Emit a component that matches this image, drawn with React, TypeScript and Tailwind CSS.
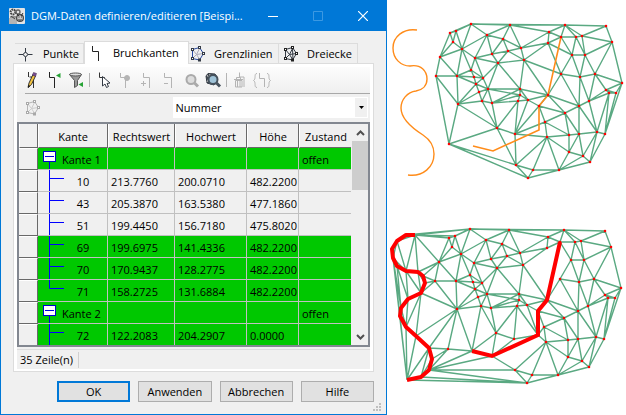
import { useState } from 'react';
import type { ReactNode } from 'react';

type Point = [number, number];

/* ---------- Triangulation ---------- */

const terrain: Point[] = [
  [450, 33], [456, 31], [453, 42], [471, 24], [462, 49], [440, 57], [487, 35], [503, 39],
  [510, 25], [508, 51], [492, 54], [475, 58], [498, 63], [471, 70], [436, 76], [457, 76],
  [474, 77], [483, 78], [476, 84], [488, 89], [479, 92], [482, 101], [458, 104], [492, 103],
  [497, 128], [449, 144], [549, 32], [565, 25], [606, 26], [561, 37], [576, 37], [582, 36],
  [548, 43], [521, 48], [524, 60], [612, 42], [572, 55], [585, 55], [561, 74], [580, 77],
  [595, 74], [622, 83], [606, 90], [609, 93], [616, 93], [520, 89], [520, 95], [528, 100],
  [518, 101], [548, 95], [539, 106], [565, 113], [579, 106], [589, 101], [545, 122], [515, 134],
  [547, 137], [569, 135], [579, 134], [597, 132], [605, 134], [569, 152], [583, 156], [590, 162],
  [559, 170], [533, 170], [516, 165], [528, 178],
];

const ridge: Point[] = [[561, 37], [548, 95], [539, 106], [539, 130], [493, 151], [473, 146]];

const shore: Point[] = [
  [416, 30], [407, 30], [398, 36], [393, 44], [394, 53], [398, 61], [407, 66], [419, 67],
  [424, 71], [426, 78], [422, 88], [409, 94], [402, 103], [401, 111], [407, 122], [417, 131],
  [430, 143], [433, 154], [430, 165], [422, 172], [408, 175],
];

const cross = (a: Point, b: Point, c: Point) =>
  (b[0] - a[0]) * (c[1] - a[1]) - (b[1] - a[1]) * (c[0] - a[0]);

const inCircle = (a: Point, b: Point, c: Point, d: Point) => {
  const ax = a[0] - d[0], ay = a[1] - d[1];
  const bx = b[0] - d[0], by = b[1] - d[1];
  const cx = c[0] - d[0], cy = c[1] - d[1];
  const a2 = ax * ax + ay * ay, b2 = bx * bx + by * by, c2 = cx * cx + cy * cy;
  return ax * (by * c2 - b2 * cy) - ay * (bx * c2 - b2 * cx) + a2 * (bx * cy - by * cx) > 0;
};

const intersects = (a: Point, b: Point, c: Point, d: Point) =>
  cross(a, b, c) * cross(a, b, d) < 0 && cross(c, d, a) * cross(c, d, b) < 0;

// Delaunay edges by the empty circle test, without those that cross a break line
function meshPath(points: Point[], breaklines: Point[][]) {
  const edges = new Map<string, [Point, Point]>();
  const n = points.length;
  for (let i = 0; i < n; i++) {
    for (let j = i + 1; j < n; j++) {
      for (let k = j + 1; k < n; k++) {
        const a = points[i];
        const turn = cross(a, points[j], points[k]);
        if (turn === 0) continue;
        const b = turn > 0 ? points[j] : points[k];
        const c = turn > 0 ? points[k] : points[j];
        if (points.some((p) => p !== a && p !== b && p !== c && inCircle(a, b, c, p))) continue;
        edges.set(`${i}-${j}`, [points[i], points[j]]);
        edges.set(`${j}-${k}`, [points[j], points[k]]);
        edges.set(`${i}-${k}`, [points[i], points[k]]);
      }
    }
  }
  return [...edges.values()]
    .filter(([a, b]) => !breaklines.some((l) => l.slice(1).some((p, i) => intersects(a, b, l[i], p))))
    .map(([a, b]) => `M${a}L${b}`)
    .join('');
}

const linePath = (line: Point[]) => 'M' + line.join('L');

const plainMesh = meshPath(terrain, []);
const brokenMesh = meshPath([...terrain, ...ridge.slice(3), ...shore], [ridge, shore]);

function Nodes() {
  return (
    <g fill="#f00">
      {terrain.map(([x, y]) => (
        <path key={`${x}-${y}`} d={`M${x - 1} ${y - 1}h2v2h-2z`} stroke="#f00" strokeWidth=".3" />
      ))}
    </g>
  );
}

function Terrain() {
  return (
    <svg viewBox="387 0 239 415" className="block w-full" fill="none" role="img" aria-label="Dreiecksnetz">
      <path d={plainMesh} stroke="#5aa982" strokeWidth="1.4" />
      <path d={linePath(ridge)} stroke="#ff8c1a" strokeWidth="1.6" />
      <path
        d="M417 30C403 28 393 37 393 48C393 59 401 66 410 66C421 64 427 71 427 79C427 86 422 90 416 91C407 92 401 100 401 108C401 119 412 128 423 135C429 139 434 146 434 154C434 167 423 177 408 175"
        stroke="#ff8c1a"
        strokeWidth="1.4"
      />
      <Nodes />
      <g transform="translate(-1 205)">
        <path d={brokenMesh} stroke="#5aa982" strokeWidth="1.4" />
        <Nodes />
        <path d={linePath(ridge)} stroke="#f00" strokeWidth="4" />
        <path d={linePath(shore)} stroke="#f00" strokeWidth="4" strokeLinejoin="round" />
      </g>
    </svg>
  );
}

/* ---------- Icons ---------- */

function Icon({ children, size = 22 }: { children: ReactNode; size?: number }) {
  return (
    <svg width={size} height={size} viewBox={`0 0 ${size} ${size}`} fill="none" stroke="currentColor" className="shrink-0">
      {children}
    </svg>
  );
}

function AppIcon() {
  return (
    <svg width="16" height="16" viewBox="0 0 16 16" fill="none" className="shrink-0">
      <rect width="16" height="16" rx="1" fill="#e4e4e4" />
      <path d="M0 10h8v6H0z" fill="#b5b5b5" />
      <circle cx="4" cy="4" r="2.4" stroke="#444" strokeWidth="2" strokeDasharray="1.6 .6" />
      <circle cx="9" cy="4" r="2" stroke="#666" strokeWidth="1.4" />
      <path d="M1 9h6M2 8l4 3" stroke="#444" />
      <circle cx="11" cy="10" r="3.4" fill="#c8c8c8" stroke="#444" strokeWidth="1.2" />
      <path d="M8 6l2 2M14 5l-2 3M9.500 9h1M12 9h1M9.500 11.500q1.500 1.500 3 0" stroke="#333" />
    </svg>
  );
}

function PointIcon() {
  return (
    <Icon size={16}>
      <path d="M1.500 8.500h4.500M11 8.500h4.500M8.500 2v4.500M8.500 11v4.500" stroke="#333a44" />
      <circle cx="8.500" cy="8.500" r="2" stroke="#333a44" />
    </Icon>
  );
}

function EdgeIcon() {
  return (
    <Icon size={16}>
      <path d="M3.500 1v5.500h6V16" stroke="#222" />
    </Icon>
  );
}

function PolygonIcon({ line, node, inner, closed }: { line: string; node: string; inner: string; closed?: boolean }) {
  return (
    <Icon size={16}>
      <path d="M2.500 3.500L6.500 8.500L9.500 2.500M2.500 12.500L6.500 8.500L10 14M6.500 8.500L13.500 7.500" stroke={inner} />
      {closed && <path d="M9.500 2.500L10 14" stroke={inner} />}
      <path d="M2.500 3.500L9.500 1.500L13.500 7.500L9.500 14L2.500 12.500Z" stroke={line} />
      <g stroke={node} fill="#fff">
        <rect x="1.500" y="2.500" width="2" height="2" />
        <rect x="8.500" y=".5" width="2" height="2" />
        <rect x="12.500" y="6.500" width="2" height="2" />
        <rect x="8.500" y="13" width="2" height="2" />
        <rect x="1.500" y="11.500" width="2" height="2" />
      </g>
    </Icon>
  );
}

function PencilIcon() {
  return (
    <Icon>
      <path d="M7.500 3v5M12.500 8v11M8.500 8h3" stroke="#333" />
      <path d="M7 18.500L8 14L12 5.500L14.500 7L10.500 15.500Z" fill="#f5c542" stroke="#222" strokeWidth=".9" />
      <path d="M11.500 6L12.500 3.500L15.500 4.500L14.500 7.500Z" fill="#7b4d94" stroke="#4b3557" strokeWidth=".6" />
      <path d="M7 19l.6-3 1.600 1z" fill="#111" stroke="none" />
    </Icon>
  );
}

function NewEdgeIcon() {
  return (
    <Icon>
      <path d="M6.500 3v5.500h5V19" stroke="#222" />
      <path d="M17.500 4v5L13 6.500Z" fill="#27a336" stroke="none" />
    </Icon>
  );
}

function FilterIcon() {
  return (
    <Icon>
      <path d="M4.500 5.500L9.500 11.500V18.500L12.500 16.500V11.500L16.500 5.500Z" fill="#999" stroke="#555" />
      <ellipse cx="10.500" cy="5.500" rx="6" ry="1.500" fill="#ddd" stroke="#555" />
      <path d="M18 13v5L13.500 15.500Z" fill="#27a336" stroke="none" />
    </Icon>
  );
}

function SelectIcon() {
  return (
    <Icon>
      <path d="M7.500 3.500v5h5V10" stroke="#333" />
      <path d="M10.500 7.500V17L13 15L14.500 18.500L16.500 17.500L15 14.500L18 14Z" fill="#fff" stroke="#333a44" />
    </Icon>
  );
}

function PinIcon() {
  return (
    <Icon>
      <path d="M6.500 4v4.500h5V19" />
      <circle cx="13" cy="9" r="2.500" fill="currentColor" />
    </Icon>
  );
}

function PlusIcon() {
  return (
    <Icon>
      <path d="M7.500 4v4.500h6V19M5 14.500h5M7.500 12v5" />
    </Icon>
  );
}

function MinusIcon() {
  return (
    <Icon>
      <path d="M6.500 4v4.500h7V19M6 14.500h4" />
    </Icon>
  );
}

function LensIcon({ active }: { active?: boolean }) {
  return (
    <Icon>
      {active && <path d="M4 7L6 4.500L13 5L15 8L12 16L5 14Z" fill="#404850" stroke="#333a44" />}
      {active && <path d="M5 6L7 9L8 5M5 13L7 9" stroke="#ccc" />}
      <circle cx="11" cy="10.500" r="4.500" fill={active ? '#9fc3d8' : '#ddd'} stroke={active ? '#46525d' : '#aaa'} strokeWidth="2" />
      <path d="M14.500 14L18 17.500" stroke={active ? '#46525d' : '#aaa'} strokeWidth="3" />
    </Icon>
  );
}

function TrashIcon() {
  return (
    <Icon>
      <path d="M10.500 3.500v4.500h4.500V18" />
      <path d="M5 10.500h9M7.500 10V8.500h4V10" />
      <path d="M6.500 11.500h6.500v6.500h-6.500zM8.500 12v6M11 12v6" />
    </Icon>
  );
}

function BracketIcon() {
  return (
    <Icon>
      <path d="M6 4.500C2.500 4.500 5.500 10 2.500 11.500C5.500 13 2.500 18.500 6 18.500M16 4.500C19.500 4.500 16.500 10 19.500 11.500C16.500 13 19.500 18.500 16 18.500" />
      <path d="M8.500 4v5.500h5V18" />
    </Icon>
  );
}

/* ---------- Dialog ---------- */

const tabs = [
  { label: 'Punkte', icon: <PointIcon />, className: 'w-[69px] gap-2.5 pl-0.5' },
  { label: 'Bruchkanten', icon: <EdgeIcon />, className: 'w-[105px] gap-2 pl-1' },
  { label: 'Grenzlinien', icon: <PolygonIcon line="#2748a0" node="#333a44" inner="#aab" />, className: 'w-[90px] gap-2 pl-px' },
  { label: 'Dreiecke', icon: <PolygonIcon line="#333a44" node="#222" inner="#333a44" closed />, className: 'w-[79px] gap-2 pl-1' },
];

const tools = [
  { label: 'Bearbeiten', icon: <PencilIcon /> },
  { label: 'Neue Kante', icon: <NewEdgeIcon /> },
  { label: 'Filter', icon: <FilterIcon /> },
  null,
  { label: 'Kante wählen', icon: <SelectIcon /> },
  { label: 'Punkt setzen', icon: <PinIcon />, disabled: true },
  { label: 'Punkt hinzufügen', icon: <PlusIcon />, disabled: true },
  { label: 'Punkt entfernen', icon: <MinusIcon />, disabled: true },
  { label: 'Zoom', icon: <LensIcon />, disabled: true },
  { label: 'Zoom auf Netz', icon: <LensIcon active /> },
  null,
  { label: 'Löschen', icon: <TrashIcon />, disabled: true },
  { label: 'Verbinden', icon: <BracketIcon />, disabled: true },
];

type Row = { name: string; values: string[]; group?: boolean; marked?: boolean; last?: boolean };

const rows: Row[] = [
  { name: 'Kante 1', values: ['', '', '', 'offen'], group: true, marked: true },
  { name: '10', values: ['213.7760', '200.0710', '482.2200', ''] },
  { name: '43', values: ['205.3870', '163.5380', '477.1860', ''] },
  { name: '51', values: ['199.4450', '156.7180', '475.8020', ''] },
  { name: '69', values: ['199.6975', '141.4336', '482.2200', ''], marked: true },
  { name: '70', values: ['170.9437', '128.2775', '482.2200', ''], marked: true },
  { name: '71', values: ['158.2725', '131.6884', '482.2200', ''], marked: true, last: true },
  { name: 'Kante 2', values: ['', '', '', 'offen'], group: true, marked: true },
  { name: '72', values: ['122.2083', '204.2907', '0.0000', ''], marked: true },
];

function TreeCell({ row }: { row: Row }) {
  if (row.group) {
    return (
      <div className="flex h-[21px] items-center">
        <svg width="24" height="21" viewBox="0 0 24 21" fill="none" className="shrink-0">
          <path d="M11.500 14v7" stroke="#00d" />
          <rect x="5.500" y="3.500" width="12" height="10" fill="#fff" stroke="#00c" />
          <path d="M7 8.500h9" stroke="#00d" />
        </svg>
        <span className="pt-0.5">{row.name}</span>
      </div>
    );
  }
  return (
    <div className="flex h-[21px] items-center">
      <svg width="26" height="21" viewBox="0 0 26 21" fill="none" className="shrink-0">
        <path d={row.last ? 'M11.500 0v8.500H26' : 'M11.500 0v21M11.500 8.500H26'} stroke="#00f" />
      </svg>
      <span className="w-[38px] pt-0.5 text-center">{row.name}</span>
    </div>
  );
}

function EdgeTable() {
  return (
    <div className="flex h-[225px] border-2 border-[#828790] bg-[#f0f0f0]">
      <div className="min-w-0 flex-1 overflow-hidden">
        <table className="w-full table-fixed border-separate border-spacing-0">
          <colgroup>
            <col className="w-[19px]" />
            <col className="w-[70px]" />
            <col className="w-[67px]" />
            <col className="w-[72px]" />
            <col className="w-[52px]" />
            <col className="w-[54px]" />
          </colgroup>
          <thead>
            <tr className="h-6">
              {['', 'Kante', 'Rechtswert', 'Hochwert', 'Höhe', 'Zustand'].map((h) => (
                <th key={h} className="whitespace-nowrap border-r border-b border-l border-r-[#696969] border-b-[#696969] border-l-white p-0 pt-0.5 font-normal">
                  {h}
                </th>
              ))}
            </tr>
          </thead>
          <tbody>
            {rows.map((row) => (
              <tr key={row.name} className={row.marked ? 'h-[22px] bg-[#00c800]' : 'h-[22px]'}>
                <td className="border-t border-r border-b border-t-white border-r-[#696969] border-b-[#696969] bg-[#f0f0f0] p-0" />
                <td className="border-r border-b border-[#c0c0c0] p-0">
                  <TreeCell row={row} />
                </td>
                {row.values.map((v, i) => (
                  <td key={i} className="border-r border-b border-[#c0c0c0] p-0 pt-0.5 pl-[3px]">
                    {v}
                  </td>
                ))}
              </tr>
            ))}
          </tbody>
        </table>
      </div>
      <div className="flex w-[17px] flex-col items-center pl-px">
        <button aria-label="Nach oben" className="flex h-[17px] w-full items-center justify-center text-[#505050]">
          <svg width="9" height="6" viewBox="0 0 9 6" fill="none" stroke="currentColor" strokeWidth="2"><path d="M1 5l3.500-3.500L8 5" /></svg>
        </button>
        <div className="h-[49px] w-full bg-[#cdcdcd]" />
        <button aria-label="Nach unten" className="mt-auto flex h-[17px] w-full items-center justify-center text-[#505050]">
          <svg width="9" height="6" viewBox="0 0 9 6" fill="none" stroke="currentColor" strokeWidth="2"><path d="M1 1l3.500 3.500L8 1" /></svg>
        </button>
      </div>
    </div>
  );
}

function Dialog() {
  const [active, setActive] = useState('Bruchkanten');

  return (
    <section className="flex flex-col border border-[#0078d7] bg-[#f0f0f0] text-[11px] leading-4 text-black">
      <header className="flex h-[30px] items-center bg-[#0078d7] pl-2 text-white">
        <AppIcon />
        <h1 className="ml-1.5 min-w-0 flex-1 whitespace-nowrap">DGM-Daten definieren/editieren [Beispi...</h1>
        <button aria-label="Minimieren" className="flex h-full w-[46px] items-center justify-center">
          <svg width="10" height="10" viewBox="0 0 10 10" stroke="currentColor"><path d="M0 5.500h10" /></svg>
        </button>
        <button aria-label="Maximieren" disabled className="flex h-full w-[44px] items-center justify-center text-[#3c99e2]">
          <svg width="10" height="10" viewBox="0 0 10 10" fill="none" stroke="currentColor"><path d="M.5.5h9v9h-9z" /></svg>
        </button>
        <button aria-label="Schließen" className="flex h-full w-[46px] items-center justify-center">
          <svg width="10" height="10" viewBox="0 0 10 10" stroke="currentColor" strokeWidth="1.200"><path d="M0 0l10 10M10 0L0 10" /></svg>
        </button>
      </header>

      <div className="px-3 pt-2.5">
        <div role="tablist" className="flex items-end pl-0.5">
          {tabs.map((tab) => (
            <button
              key={tab.label}
              role="tab"
              aria-selected={active === tab.label}
              onClick={() => setActive(tab.label)}
              className={`flex items-center whitespace-nowrap border-t border-r border-[#dcdcdc] ${tab.className} ${
                active === tab.label ? '-mb-px h-[23px] border-l bg-white' : 'h-5'
              }`}
            >
              {tab.icon}
              {tab.label}
            </button>
          ))}
        </div>

        <div className="border border-[#dcdcdc] bg-white px-[3px] pt-[3px] pb-0.5">
          <div className="bg-[#f0f0f0]">
            <div className="bg-linear-to-b from-[#fcfcfc] to-[#efefef]">
              <div className="ml-2 flex h-[27px] items-center border-b border-[#a8a8a8]">
                <div className="-ml-1 flex items-center">
                  {tools.map((tool, i) =>
                    tool ? (
                      <button
                        key={tool.label}
                        aria-label={tool.label}
                        disabled={tool.disabled}
                        className="text-[#222] disabled:text-[#b4b4b4]"
                      >
                        {tool.icon}
                      </button>
                    ) : (
                      <span key={i} className="mx-0.5 h-3.5 w-px bg-[#b4b4b4]" />
                    ),
                  )}
                </div>
              </div>
            </div>
            <div className="flex h-7 items-center pl-2 pr-0.5 pb-px">
              <PolygonIcon line="#b4b4b4" node="#a8a8a8" inner="#ccc" />
              <div className="relative ml-auto w-[57%]">
                <select aria-label="Sortierung" className="h-[21px] w-full appearance-none bg-white pl-[3px] outline-none">
                  <option>Nummer</option>
                </select>
                <span className="pointer-events-none absolute top-px right-px flex h-[19px] w-3 items-center justify-center bg-[#f0f0f0]">
                  <svg width="5" height="3" viewBox="0 0 5 3"><path d="M0 0h5L2.500 3z" /></svg>
                </span>
              </div>
            </div>
            <EdgeTable />
            <div className="mt-0.5 flex h-5 items-center border-t border-[#dcdcdc]">
              <span className="w-[62px] whitespace-nowrap border-r border-[#d0d0d0] pl-[3px]">35 Zeile(n)</span>
            </div>
          </div>
        </div>
      </div>

      <footer className="relative mt-auto grid grid-cols-4 gap-2 pr-3 pb-3 pl-14">
        {['OK', 'Anwenden', 'Abbrechen', 'Hilfe'].map((label) => (
          <button
            key={label}
            className={`h-[21px] bg-[#e1e1e1] ${label === 'OK' ? 'border-2 border-[#0078d7]' : 'border border-[#adadad]'}`}
          >
            {label}
          </button>
        ))}
        <svg width="9" height="9" viewBox="0 0 9 9" fill="#bfbfbf" className="absolute right-1 bottom-0.5">
          <path d="M6 0h2v2H6zM3 3h2v2H3zM6 3h2v2H6zM0 6h2v2H0zM3 6h2v2H3zM6 6h2v2H6z" />
        </svg>
      </footer>
    </section>
  );
}

export default function App() {
  return (
    <main className="grid min-h-screen grid-cols-[minmax(0,387fr)_minmax(0,239fr)] bg-white font-['Open_Sans','Noto_Sans',sans-serif]">
      <Dialog />
      <Terrain />
    </main>
  );
}
